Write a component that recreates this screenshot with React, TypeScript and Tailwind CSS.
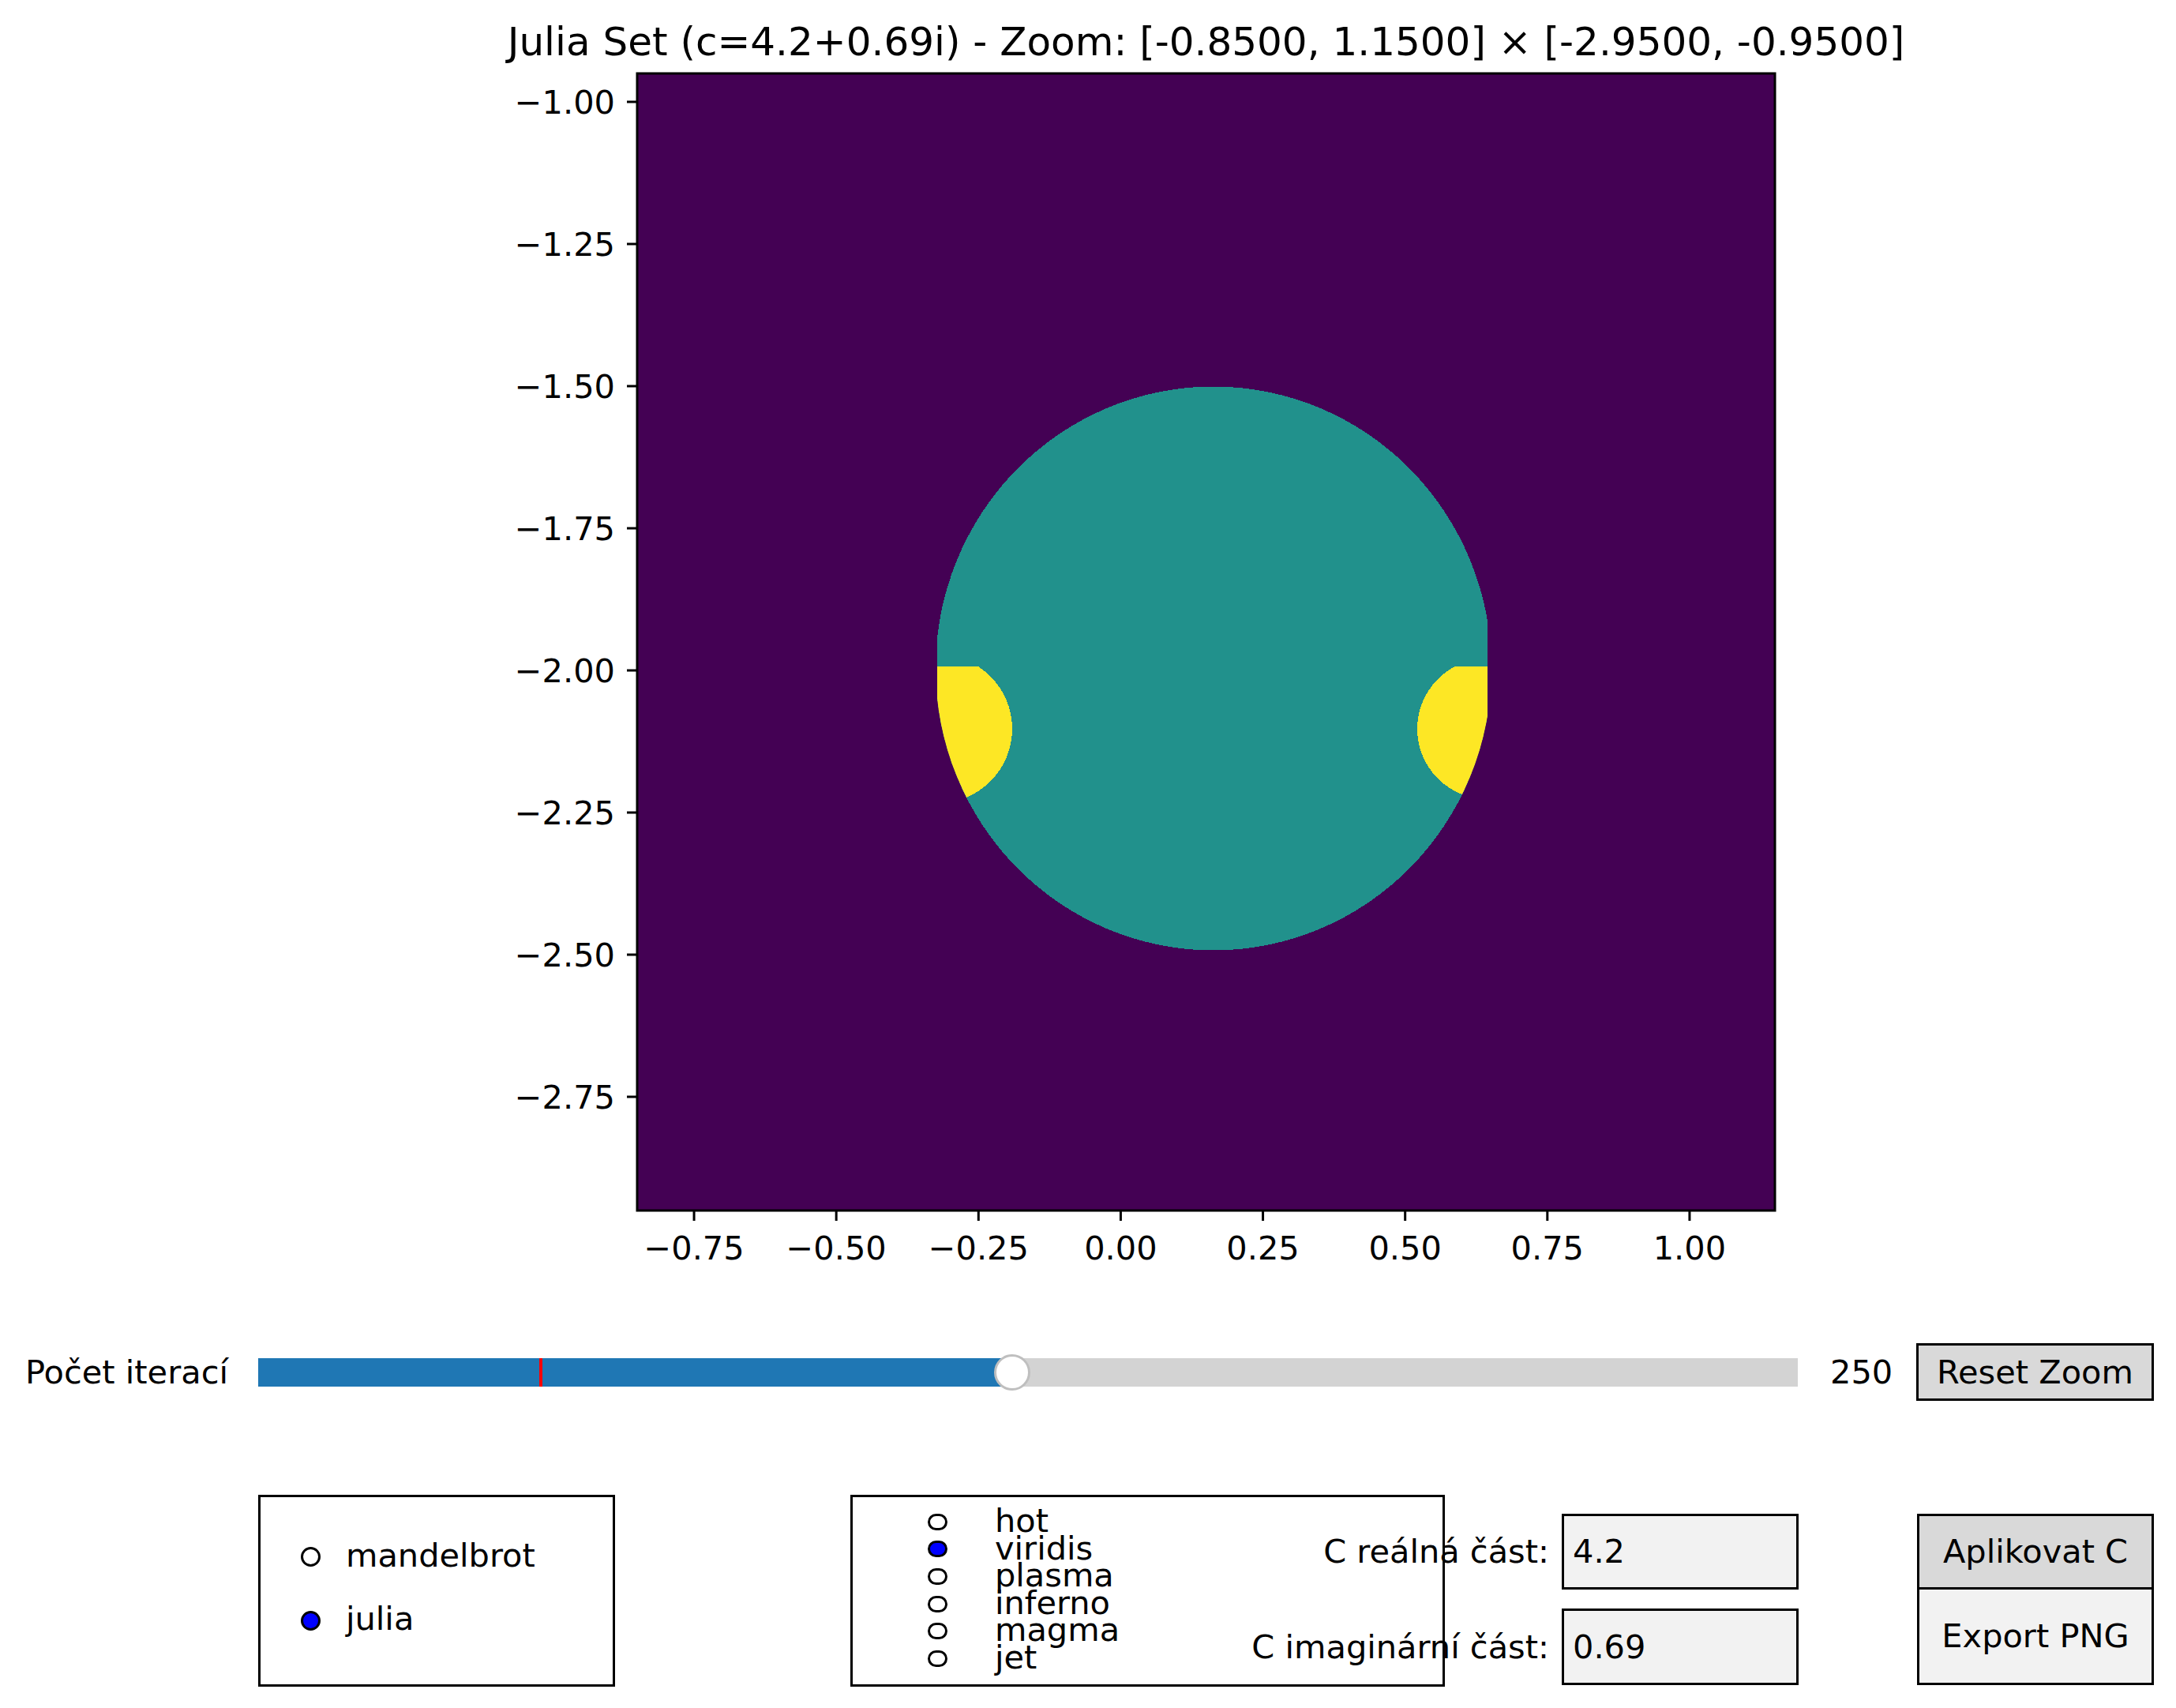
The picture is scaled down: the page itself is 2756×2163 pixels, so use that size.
import React from "react";

const PURPLE = "#440154";
const TEAL = "#21918c";
const YELLOW = "#fde725";

// axes box in svg coords (svg sits at page y=90)
const X0 = 807;
const X1 = 2248;
const Y0 = 3;
const Y1 = 1443;
const FS = 41.5;

const yPos = (v: number) => Y0 + (-0.95 - v) * 720;
const xPos = (v: number) => X0 + (v + 0.85) * 720.5;

const fmt = (v: number) => (v < 0 ? "\u2212" : "") + Math.abs(v).toFixed(2);

const yTicks = [-1.0, -1.25, -1.5, -1.75, -2.0, -2.25, -2.5, -2.75];
const xTicks = [-0.75, -0.5, -0.25, 0, 0.25, 0.5, 0.75, 1.0];

function Chart() {
  return (
    <svg width={2756} height={1515} className="block" style={{ fontFamily: "'DejaVu Sans', sans-serif" }}>
      <defs>
        <clipPath id="axes">
          <rect x={X0} y={Y0} width={X1 - X0} height={Y1 - Y0} />
        </clipPath>
        <clipPath id="xband">
          <rect x={1187} y={0} width={697} height={1500} />
        </clipPath>
        <clipPath id="disk">
          <ellipse cx={1537} cy={756.5} rx={352} ry={357} />
        </clipPath>
        <clipPath id="lower">
          <rect x={0} y={754} width={2756} height={800} />
        </clipPath>
      </defs>

      <g clipPath="url(#axes)" shapeRendering="crispEdges">
        <rect x={X0} y={Y0} width={X1 - X0} height={Y1 - Y0} fill={PURPLE} />
        <g clipPath="url(#xband)">
          <ellipse cx={1537} cy={756.5} rx={352} ry={357} fill={TEAL} />
          <g clipPath="url(#disk)">
            <g clipPath="url(#lower)">
              <circle cx={1188} cy={833} r={94} fill={YELLOW} />
              <circle cx={1884} cy={833} r={89} fill={YELLOW} />
            </g>
          </g>
        </g>
      </g>
      <rect x={X0} y={Y0} width={X1 - X0} height={Y1 - Y0} fill="none" stroke="#000" strokeWidth={3} />

      {yTicks.map((v) => (
        <g key={v}>
          <line x1={794} x2={X0} y1={yPos(v)} y2={yPos(v)} stroke="#000" strokeWidth={3} />
          <text x={779} y={yPos(v) + 15.1} textAnchor="end" fontSize={FS} fill="#000">
            {fmt(v)}
          </text>
        </g>
      ))}
      {xTicks.map((v) => (
        <g key={v}>
          <line x1={xPos(v)} x2={xPos(v)} y1={Y1} y2={Y1 + 13} stroke="#000" strokeWidth={3} />
          <text x={xPos(v)} y={1505} textAnchor="middle" fontSize={FS} fill="#000">
            {fmt(v)}
          </text>
        </g>
      ))}
    </svg>
  );
}

function Dot({ on, wide }: { on?: boolean; wide?: boolean }) {
  return (
    <span
      className={
        (wide ? "w-[25px] h-[21px] " : "w-[25px] h-[25px] ") +
        "shrink-0 rounded-full border-[3px] border-black " +
        (on ? "bg-[#0000ff]" : "bg-white")
      }
    />
  );
}

const maps = ["hot", "viridis", "plasma", "inferno", "magma", "jet"];

export default function App() {
  return (
    <div className="w-[2756px] h-[2163px] overflow-hidden bg-white text-black font-['DejaVu_Sans',sans-serif]">
      <div className="h-[90px] pt-[28px]">
        <div className="ml-[807px] w-[1441px] flex justify-center">
          <span className="whitespace-nowrap text-[50px] leading-[50px]">
            Julia Set (c=4.2+0.69i) - Zoom: [-0.8500, 1.1500] × [-2.9500, -0.9500]
          </span>
        </div>
      </div>

      <Chart />

      {/* slider row */}
      <div className="mt-[96px] flex h-[73px] items-center text-[41.5px] leading-none">
        <div className="w-[289px] whitespace-nowrap text-right">Počet iterací</div>
        <div className="relative ml-[38px] h-[36px] w-[1950px] bg-[#d3d3d3]">
          <div className="absolute left-0 top-0 h-full w-[955px] bg-[#1f77b4]" />
          <div className="absolute left-[356px] top-0 h-full w-[4px] bg-[#ff0000]" />
          <div className="absolute left-[932px] top-1/2 h-[46px] w-[46px] -translate-y-1/2 rounded-full border-[3px] border-[#bfbfbf] bg-white" />
        </div>
        <div className="ml-[41px] w-[76px] whitespace-nowrap">250</div>
        <div className="ml-[33px] flex h-[73px] w-[301px] items-center justify-center border-[3px] border-black bg-[#d9d9d9]">
          Reset Zoom
        </div>
      </div>

      {/* bottom widgets */}
      <div className="mt-[119px] flex items-start text-[41.5px] leading-none">
        <div className="ml-[327px] h-[243px] w-[452px] border-[3px] border-black pl-[51px] pt-[35px]">
          <div className="flex h-[81px] items-center gap-[32px]">
            <Dot />
            <span className="-mt-[3px]">mandelbrot</span>
          </div>
          <div className="flex h-[81px] items-center gap-[32px]">
            <Dot on />
            <span className="-mt-[6px]">julia</span>
          </div>
        </div>

        <div className="ml-[298px] h-[243px] w-[753px] border-[3px] border-black pl-[95px] pt-[14px]">
          {maps.map((m) => (
            <div key={m} className="flex h-[34.6px] items-center gap-[60px]">
              <Dot wide on={m === "viridis"} />
              <span className="-mt-[3px]">{m}</span>
            </div>
          ))}
        </div>

        <div className="ml-[148px] flex w-[300px] flex-col">
          <div className="relative mt-[24px] flex h-[96px] items-center border-[3px] border-black bg-[#f2f2f2] pl-[11px]">
            <span className="absolute right-full top-1/2 mr-[19px] -translate-y-1/2 whitespace-nowrap">C reálná část:</span>
            4.2
          </div>
          <div className="relative mt-[24px] flex h-[97px] items-center border-[3px] border-black bg-[#f2f2f2] pl-[11px]">
            <span className="absolute right-full top-1/2 mr-[19px] -translate-y-1/2 whitespace-nowrap">C imaginární část:</span>
            0.69
          </div>
        </div>

        <div className="ml-[150px] mt-[24px] flex w-[300px] flex-col">
          <div className="flex h-[96px] items-center justify-center border-[3px] border-black bg-[#d9d9d9]">Aplikovat C</div>
          <div className="flex h-[121px] items-center justify-center border-[3px] border-t-0 border-black bg-[#f2f2f2]">Export PNG</div>
        </div>
      </div>
    </div>
  );
}
